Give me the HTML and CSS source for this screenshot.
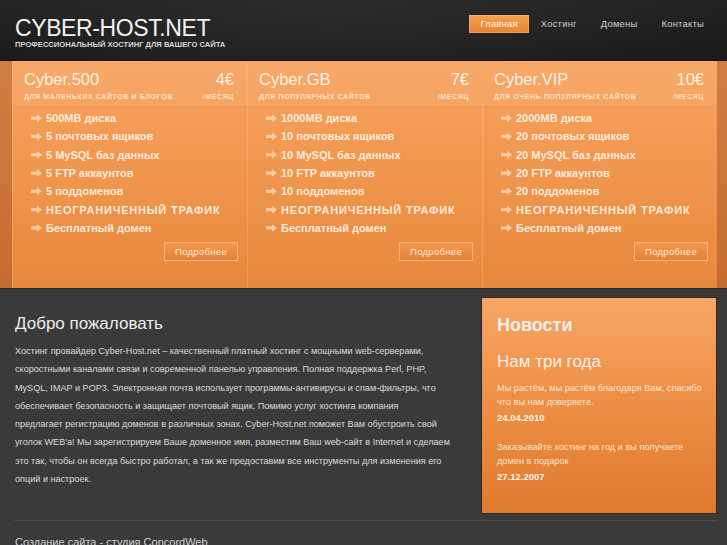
FILE: index.html
```html
<!DOCTYPE html>
<html lang="ru">
<head>
<meta charset="utf-8">
<title>Cyber-Host.net</title>
<link rel="stylesheet" href="styles.css">
</head>
<body>
<div class="page">
  <header class="top">
    <div class="brand">
      <div class="logo">CYBER-HOST.NET</div>
      <div class="tagline">ПРОФЕССИОНАЛЬНЫЙ ХОСТИНГ ДЛЯ ВАШЕГО САЙТА</div>
    </div>
    <nav class="nav">
      <a class="nav-link active" href="#">Главная</a>
      <a class="nav-link" href="#">Хостинг</a>
      <a class="nav-link" href="#">Домены</a>
      <a class="nav-link" href="#">Контакты</a>
    </nav>
  </header>

  <section class="plans">
    <div class="edge edge-left"></div>

    <div class="plan">
      <div class="plan-head">
        <div class="plan-row">
          <span class="plan-name">Cyber.500</span>
          <span class="plan-price">4€</span>
        </div>
        <div class="plan-row plan-sub">
          <span>ДЛЯ МАЛЕНЬКИХ САЙТОВ И БЛОГОВ</span>
          <span>/МЕСЯЦ</span>
        </div>
      </div>
      <ul class="features">
        <li>500MB диска</li>
        <li>5 почтовых ящиков</li>
        <li>5 MySQL баз данных</li>
        <li>5 FTP аккаунтов</li>
        <li>5 поддоменов</li>
        <li class="caps">НЕОГРАНИЧЕННЫЙ ТРАФИК</li>
        <li>Бесплатный домен</li>
      </ul>
      <div class="plan-foot"><a class="more" href="#">Подробнее</a></div>
    </div>

    <div class="plan">
      <div class="plan-head">
        <div class="plan-row">
          <span class="plan-name">Cyber.GB</span>
          <span class="plan-price">7€</span>
        </div>
        <div class="plan-row plan-sub">
          <span>ДЛЯ ПОПУЛЯРНЫХ САЙТОВ</span>
          <span>/МЕСЯЦ</span>
        </div>
      </div>
      <ul class="features">
        <li>1000MB диска</li>
        <li>10 почтовых ящиков</li>
        <li>10 MySQL баз данных</li>
        <li>10 FTP аккаунтов</li>
        <li>10 поддоменов</li>
        <li class="caps">НЕОГРАНИЧЕННЫЙ ТРАФИК</li>
        <li>Бесплатный домен</li>
      </ul>
      <div class="plan-foot"><a class="more" href="#">Подробнее</a></div>
    </div>

    <div class="plan">
      <div class="plan-head">
        <div class="plan-row">
          <span class="plan-name">Cyber.VIP</span>
          <span class="plan-price">10€</span>
        </div>
        <div class="plan-row plan-sub">
          <span>ДЛЯ ОЧЕНЬ ПОПУЛЯРНЫХ САЙТОВ</span>
          <span>/МЕСЯЦ</span>
        </div>
      </div>
      <ul class="features">
        <li>2000MB диска</li>
        <li>20 почтовых ящиков</li>
        <li>20 MySQL баз данных</li>
        <li>20 FTP аккаунтов</li>
        <li>20 поддоменов</li>
        <li class="caps">НЕОГРАНИЧЕННЫЙ ТРАФИК</li>
        <li>Бесплатный домен</li>
      </ul>
      <div class="plan-foot"><a class="more" href="#">Подробнее</a></div>
    </div>

    <div class="edge edge-right"></div>
  </section>

  <main class="content">
    <div class="welcome">
      <h1 class="welcome-title">Добро пожаловать</h1>
      <p class="welcome-text">Хостинг провайдер Cyber-Host.net – качественный платный хостинг с мощными web-серверами,<br>скоростными каналами связи и современной панелью управления. Полная поддержка Perl, PHP,<br>MySQL, IMAP и POP3. Электронная почта использует программы-антивирусы и спам-фильтры, что<br>обеспечивает безопасность и защищает почтовый ящик. Помимо услуг хостинга компания<br>предлагает регистрацию доменов в различных зонах. Cyber-Host.net поможет Вам обустроить свой<br>уголок WEB'a! Мы зарегистрируем Ваше доменное имя, разместим Ваш web-сайт в Internet и сделаем<br>это так, чтобы он всегда быстро работал, а так же предоставим все инструменты для изменения его<br>опций и настроек.</p>
    </div>
    <aside class="news">
      <h2 class="news-title">Новости</h2>
      <h3 class="news-head">Нам три года</h3>
      <p class="news-text">Мы растём, мы растём благодаря Вам, спасибо что вы нам доверяете.</p>
      <div class="news-date">24.04.2010</div>
      <p class="news-text news-gap">Заказывайте хостинг на год и вы получаете домен в подарок</p>
      <div class="news-date">27.12.2007</div>
    </aside>
  </main>

  <footer class="footer">
    <span>Создание сайта - студия ConcordWeb</span>
  </footer>
</div>
</body>
</html>
```

FILE: styles.css
```css
* { box-sizing: border-box; }

body {
  margin: 0;
  background: #3a3a3a;
  font-family: "Liberation Sans", Arial, Helvetica, sans-serif;
  color: #e2e2e2;
}

.page {
  width: 727px;
  min-height: 545px;
  background: #3a3a3a;
}

/* header */
.top {
  height: 61px;
  display: flex;
  justify-content: space-between;
  align-items: flex-start;
  padding: 0 11px 0 15px;
  background:
    radial-gradient(ellipse 420px 90px at 45% 0%, #2c2c2c 0%, rgba(28,28,28,0) 100%),
    linear-gradient(#222 0%, #1b1b1b 100%);
  border-bottom: 1px solid #141414;
}

.brand { padding-top: 17px; }

.logo {
  font-size: 23px;
  line-height: 23px;
  letter-spacing: -0.4px;
  color: #f2f2f2;
}

.tagline {
  font-size: 7.6px;
  line-height: 9px;
  font-weight: bold;
  color: #d8d8d8;
  white-space: nowrap;
}

.nav {
  display: flex;
  padding-top: 15px;
}

.nav-link {
  display: block;
  height: 18px;
  line-height: 18px;
  padding: 0 12px;
  font-size: 9.4px;
  letter-spacing: 0.25px;
  color: #cfcfcf;
  text-decoration: none;
}

.nav-link.active {
  padding: 0 11px;
  color: #fff3e8;
  background: linear-gradient(#f5a152 0%, #e7832f 100%);
  box-shadow: inset 0 0 0 1px rgba(255, 200, 150, 0.35);
}

/* plans band */
.plans {
  display: flex;
  height: 227px;
}

.edge {
  background: linear-gradient(#d07d43 0%, #c56d31 100%);
}
.edge-left { width: 12px; }
.edge-right { width: 10px; }

.plan {
  width: 235px;
  display: flex;
  flex-direction: column;
  background: linear-gradient(#f7a462 0%, #f29a53 35%, #e7883c 100%);
  border-left: 1px solid rgba(255, 225, 195, 0.18);
}
.plan:first-of-type { border-left: 0; }

.plan-head {
  padding: 9px 13px 5px 11px;
  background: rgba(255, 200, 150, 0.14);
  border-bottom: 1px solid rgba(230, 140, 70, 0.35);
}

.plan-row {
  display: flex;
  justify-content: space-between;
  align-items: baseline;
}

.plan-name,
.plan-price {
  font-size: 16.5px;
  line-height: 18px;
  color: #fdf0e6;
}

.plan-sub {
  margin-top: 4px;
  font-size: 7px;
  line-height: 9px;
  font-weight: bold;
  letter-spacing: 0.6px;
  color: #fde0c8;
}

.features {
  list-style: none;
  margin: 0;
  padding: 2px 0 0 18px;
}

.features li {
  display: flex;
  align-items: center;
  gap: 4px;
  height: 18.3px;
  font-size: 11px;
  font-weight: bold;
  color: #fdeadb;
}

.features li::before {
  content: "";
  width: 11px;
  height: 8px;
  flex: none;
  background: rgba(255, 220, 190, 0.75);
  clip-path: polygon(0 30%, 55% 30%, 55% 0, 100% 50%, 55% 100%, 55% 70%, 0 70%);
}

.features li.caps { letter-spacing: 0.8px; }

.plan-foot {
  display: flex;
  justify-content: flex-end;
  padding: 5px 9px 0 0;
}

.more {
  display: block;
  width: 74px;
  height: 19px;
  line-height: 17px;
  text-align: center;
  font-size: 9.5px;
  letter-spacing: 0.3px;
  color: #fdeadb;
  text-decoration: none;
  border: 1px solid rgba(255, 205, 160, 0.6);
  background: linear-gradient(#f3994c 0%, #e4803a 100%);
}

/* content */
.content {
  display: flex;
  padding: 0 10px 0 15px;
  border-top: 1px solid #2c2c2c;
}

.welcome {
  flex: none;
  width: 466px;
  min-width: 0;
  padding-top: 25px;
}

.welcome-title {
  margin: 0;
  font-size: 17px;
  line-height: 20px;
  font-weight: normal;
  color: #eeeeee;
}

.welcome-text {
  margin: 8px 0 0;
  font-size: 9.1px;
  line-height: 18.3px;
  color: #dcdcdc;
  white-space: nowrap;
}

.news {
  flex: none;
  width: 236px;
  height: 217px;
  margin-top: 8px;
  padding: 16px 10px 0 15px;
  background: linear-gradient(#f7a665 0%, #ee9148 45%, #e07a2d 100%);
  border: 1px solid #2a2a2a;
  color: #fbe4d2;
}

.news-title {
  margin: 0;
  font-size: 18px;
  line-height: 22px;
  font-weight: bold;
  color: #f6f0ec;
}

.news-head {
  margin: 16px 0 0;
  font-size: 17px;
  line-height: 20px;
  font-weight: normal;
  color: #fcf1e8;
}

.news-text {
  margin: 9px 0 0;
  font-size: 9.2px;
  line-height: 14px;
}

.news-text.news-gap { margin-top: 14px; }

.news-date {
  margin-top: 1px;
  font-size: 9.5px;
  line-height: 16px;
  font-weight: bold;
  color: #fff4ea;
}

/* footer */
.footer {
  margin: 6px 10px 0 15px;
  padding-top: 14px;
  border-top: 1px dotted #5a5a5a;
  font-size: 11px;
  line-height: 14px;
  color: #d0d0d0;
}
```
